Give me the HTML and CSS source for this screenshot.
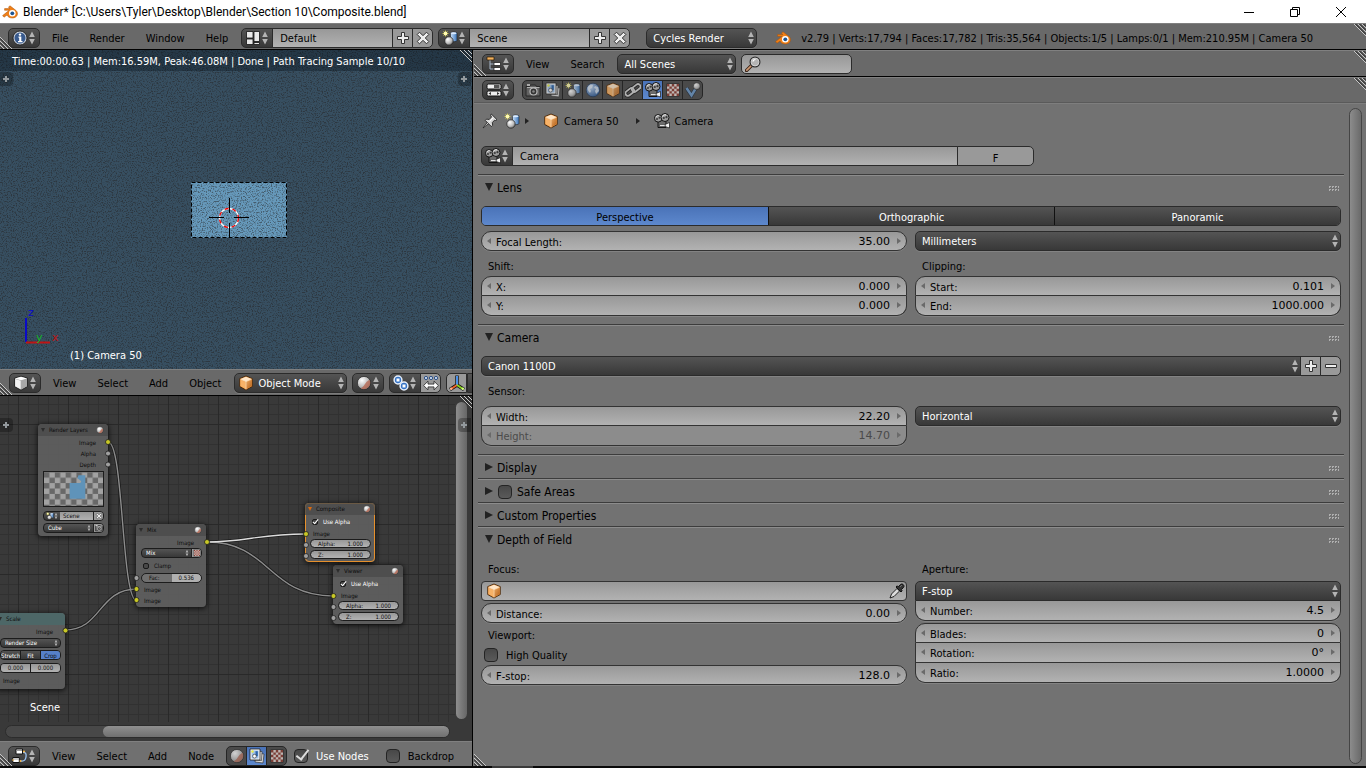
FILE: index.html
```html
<!DOCTYPE html>
<html lang="en">
<head>
<meta charset="utf-8">
<title>Blender* [C:\Users\Tyler\Desktop\Blender\Section 10\Composite.blend]</title>
<link rel="stylesheet" href="styles.css">
</head>
<body>
<svg class="sprite" width="0" height="0" aria-hidden="true">
  <defs>
    <linearGradient id="gOrange" x1="0" y1="0" x2="1" y2="1"><stop offset="0" stop-color="#e9a862"/><stop offset="1" stop-color="#b5601a"/></linearGradient>
    <radialGradient id="gBall" cx=".35" cy=".3" r=".8"><stop offset="0" stop-color="#fff"/><stop offset=".6" stop-color="#bbb"/><stop offset="1" stop-color="#555"/></radialGradient>
    <radialGradient id="gWorld" cx=".35" cy=".3" r=".8"><stop offset="0" stop-color="#b9d2f0"/><stop offset="1" stop-color="#24508c"/></radialGradient>
    <linearGradient id="gCyl" x1="0" x2="1"><stop offset="0" stop-color="#c8e0fa"/><stop offset="1" stop-color="#3b74b8"/></linearGradient>
    <filter id="grain" x="0" y="0" width="100%" height="100%" color-interpolation-filters="sRGB"><feTurbulence type="fractalNoise" baseFrequency=".8" numOctaves="2" seed="4"/><feColorMatrix values="0 0 0 0 .14  0 0 0 0 .13  0 0 0 0 .13  0 4 0 0 -1.9"/></filter>
  </defs>
  <symbol id="updown" viewBox="0 0 8 16"><path d="M4 1.500 6.800 7H1.200zM4 14.500 1.200 9H6.800z" fill="#b4b4b4"/></symbol>
  <symbol id="logo" viewBox="0 0 16 16"><path d="M.6 11.600 7.200 6.300H2.600V4.600H8L6.400 3.200 8 1.800 14 6.500C17 9.200 15.300 14 10.300 14 7.500 14 5.700 12.700 5.100 11L2 13.200z" fill="#f08018" stroke="#a85008" stroke-width=".5"/><circle cx="10.300" cy="9.300" r="3.300" fill="#fff"/><circle cx="10.300" cy="9.300" r="1.900" fill="#1d5594"/></symbol>
  <symbol id="info" viewBox="0 0 16 16"><circle cx="8" cy="8" r="7" fill="#c9cfd8" stroke="#111" stroke-width=".8"/><circle cx="8" cy="8" r="5.500" fill="#385a8e"/><path d="M6.500 6.500h2.800v4.500h1.200v1.300H6v-1.300h1.200V7.800h-.7z" fill="#fff"/><circle cx="8" cy="4.600" r="1.200" fill="#fff"/></symbol>
  <symbol id="layout" viewBox="0 0 16 16"><path d="M1.500 1.500h6.500v6.500H1.500zM1.500 9h6.500v5.500H1.500zM9 1.500h5.500v10H9zM9 12.500h5.500v2H9z" fill="#e8e8e8" stroke="#111" stroke-width=".8"/></symbol>
  <symbol id="plus" viewBox="0 0 16 16"><path d="M6.500 2.500h3v4h4v3h-4v4h-3v-4h-4v-3h4z" fill="#eee" stroke="#333" stroke-width="1"/></symbol>
  <symbol id="minus" viewBox="0 0 16 16"><path d="M2.500 6.500h11v3h-11z" fill="#eee" stroke="#333"/></symbol>
  <symbol id="cross" viewBox="0 0 16 16"><path d="M4.500 2.200 8 5.700 11.500 2.200 13.800 4.500 10.300 8 13.800 11.500 11.500 13.800 8 10.300 4.500 13.800 2.200 11.500 5.700 8 2.200 4.500z" fill="#eee" stroke="#333"/></symbol>
  <symbol id="scene" viewBox="0 0 16 16"><path d="M8.500 3.200c0-1.500 6.500-1.500 6.500 0v7.300c0 1.500-6.500 1.500-6.500 0z" fill="url(#gCyl)" stroke="#222" stroke-width=".6"/><ellipse cx="11.750" cy="3.300" rx="2.800" ry="1" fill="#dcecff"/><circle cx="7" cy="11" r="4.200" fill="url(#gBall)" stroke="#222" stroke-width=".7"/><path d="M3.500.5v6M.5 3.500h6M1.400 1.400l4.200 4.200M5.600 1.400 1.400 5.600" stroke="#d8d040" stroke-width=".8"/><circle cx="3.500" cy="3.500" r="1.900" fill="#fffbb0"/></symbol>
  <symbol id="outliner" viewBox="0 0 16 16"><path d="M4 4v9h4M4 8h4" fill="none" stroke="#a7b6c8"/><path d="M1 1h7v3H1z" fill="#f4b25e" stroke="#2a1800" stroke-width=".7"/><path d="M8 6.500h6.500v3H8zM8 11.500h6.500v3H8z" fill="#fff" stroke="#111" stroke-width=".7"/></symbol>
  <symbol id="props" viewBox="0 0 16 16"><rect x="1" y="2" width="14" height="5" rx="1.500" fill="#eee" stroke="#111"/><path d="M8 3h5.500v3H8z" fill="#555"/><rect x="1" y="9" width="14" height="5" rx="1.500" fill="#eee" stroke="#111"/><path d="M5 10v3l-2.500-1.500zM11 10v3l2.500-1.500z" fill="#333"/></symbol>
  <symbol id="photo" viewBox="0 0 16 16"><path d="M1 4.500h3.500l1-1.500h5l1 1.500h3.500v9.500H1z" fill="#6a6a6a" stroke="#1c1c1c"/><path d="M2 5.500h12.500" stroke="#d0d0d0"/><circle cx="8.500" cy="9.500" r="3.500" fill="#2a2a2a" stroke="#ddd" stroke-width="1.200"/><circle cx="8.500" cy="9.500" r="1.300" fill="#999"/><path d="M2 2h3v2H2z" fill="#ccc"/></symbol>
  <symbol id="rlayers" viewBox="0 0 16 16"><path d="m7 5 8 1-1 9-8-1z" fill="#ddd" stroke="#333" stroke-width=".7"/><path d="m5 3 8 .5-.5 9-8-.5z" fill="#eee" stroke="#333" stroke-width=".7"/><path d="M1 1h10v11H1z" fill="#f6f6f6" stroke="#222" stroke-width=".8"/><path d="M2.500 2.500h7v8h-7z" fill="#9cc0e8"/><path d="M6.500 3.200h2.300v5H6.500z" fill="#2a62a8"/><circle cx="5.500" cy="8.200" r="1.900" fill="#fff" stroke="#222" stroke-width=".6"/><circle cx="3.500" cy="3.500" r="1.200" fill="#ee4"/></symbol>
  <symbol id="world" viewBox="0 0 16 16"><circle cx="8" cy="8" r="6.800" fill="url(#gWorld)" stroke="#1b3150" stroke-width=".7"/><path d="M3 5c2-3 4-2 5-2l-1 3-2 1 1 2-1 2C3 9 2 7 3 5zM10 4l3 1 1 4-3 3-1-3 1-2-2-1z" fill="#e4ecf5" opacity=".8"/></symbol>
  <symbol id="cube" viewBox="0 0 16 16"><path d="M8 1 14.300 3.600V11.500L8 15 1.700 11.500V3.600z" fill="#e8913c" stroke="#3a1e05" stroke-width=".8"/><path d="M8 1.700 13.500 4 8 6.400 2.500 4z" fill="#ffe6c8"/><path d="M2.400 4.700 7.700 7v7L2.400 11z" fill="#f7b268"/><path d="M8.300 7 13.600 4.700V11L8.300 14z" fill="url(#gOrange)"/><path d="M8 6.500V14.500M2.500 4.300 8 6.600l5.500-2.300" fill="none" stroke="#fff1dc" stroke-width=".6"/></symbol>
  <symbol id="box3d" viewBox="0 0 16 16"><path d="M8 1.200 14.500 3.200V11.500L8 15.200 1.500 11.500V3.200z" fill="#aaa" stroke="#151515" stroke-width=".8"/><path d="M8 1.700 14 3.500 8 5.200 2 3.500z" fill="#fff"/><path d="m2.200 4 5.500 1.700v8.600l-5.500-3z" fill="#f2f2f2"/><path d="m8.300 5.700 5.500-1.700v7.300l-5.500 3z" fill="#a8a8a8"/></symbol>
  <symbol id="chain" viewBox="0 0 16 16"><g fill="none" stroke="#1c1c1c" stroke-width="3.600"><rect x="0" y="7.500" width="9.500" height="5" rx="2.500" transform="rotate(-38 4.700 10)"/><rect x="6.500" y="3.500" width="9.500" height="5" rx="2.500" transform="rotate(-38 11.200 6)"/></g><g fill="none" stroke="#d4d4d4" stroke-width="1.800"><rect x="0" y="7.500" width="9.500" height="5" rx="2.500" transform="rotate(-38 4.700 10)"/><rect x="6.500" y="3.500" width="9.500" height="5" rx="2.500" transform="rotate(-38 11.200 6)"/></g></symbol>
  <symbol id="movie" viewBox="0 0 16 16"><path d="M4 7h8v7.500H4z" fill="#6c6c6c" stroke="#151515"/><path d="m11 11.500 4.500-2v5.500L11 13.500z" fill="#f2f2f2" stroke="#151515" stroke-width=".7"/><path d="M5.500 11.500h5.500v2H5.500z" fill="#e4e4e4" stroke="#222" stroke-width=".5"/><circle cx="4.200" cy="5.300" r="3.800" fill="#9c9c9c" stroke="#151515"/><circle cx="11" cy="4.500" r="4" fill="#9c9c9c" stroke="#151515"/><path d="M1.900 4.300C2.400 3 3.500 2.500 4.600 2.600M8.400 3.600C9 2 10.500 1.500 12 1.900" stroke="#f0f0f0" fill="none"/><g fill="#3a3a3a"><circle cx="3" cy="6" r="1"/><circle cx="5.500" cy="4.800" r="1"/><circle cx="9.800" cy="5" r="1.100"/><circle cx="12.500" cy="4.200" r="1.100"/></g></symbol>
  <symbol id="checker" viewBox="0 0 16 16"><path d="M1.500 1.500h13v13h-13z" fill="#e4dad5" stroke="#333"/><path d="M2 2h2.400v2.400H2zM6.800 2h2.400v2.400H6.800zM11.600 2H14v2.400h-2.400zM4.400 4.400h2.400v2.400H4.400zM9.200 4.400h2.400v2.400H9.200zM2 6.800h2.400v2.400H2zM6.800 6.800h2.400v2.400H6.800zM11.600 6.800H14v2.400h-2.400zM4.400 9.200h2.400v2.400H4.400zM9.200 9.200h2.400v2.400H9.200zM2 11.600h2.400V14H2zM6.800 11.600h2.400V14H6.800zM11.600 11.600H14V14h-2.400z" fill="#8c3a30"/></symbol>
  <symbol id="physics" viewBox="0 0 16 16"><path d="m1.500 6 5 7.500L11 6" fill="none" stroke="#202c3a" stroke-width="3.800"/><path d="m1.500 6 5 7.500L11 6" fill="none" stroke="#6c98c6" stroke-width="2.500"/><circle cx="11.800" cy="4.200" r="3.500" fill="url(#gBall)" stroke="#222" stroke-width=".6"/></symbol>
  <symbol id="pin" viewBox="0 0 16 16"><path d="m1 15 5-6.500L7.500 10z" fill="#eee" stroke="#222" stroke-width=".8"/><path d="m9.300 1 5.700 5.700-1.500.8-1-.3-2.200 2.400.4 2.600-1.400 1.300L3.300 7.500l1.300-1.400 2.600.4L9.500 4l-.8-1.500z" fill="#d8d8d8" stroke="#222" stroke-width=".9"/><path d="m7.500 8.500 3.500-3.700" stroke="#fff"/></symbol>
  <symbol id="material" viewBox="0 0 16 16"><circle cx="8" cy="8" r="6.600" fill="url(#gBall)" stroke="#222" stroke-width=".7"/><path d="M13.500 4.800A6.500 6.500 0 0 1 4.800 13.500Q8 11.500 9 9t4.500-4.200z" fill="#b76f5a" opacity=".85"/></symbol>
  <symbol id="pivot" viewBox="0 0 16 16"><g fill="#3572c4" stroke="#e8f0fb" stroke-width="1.500"><circle cx="5" cy="5" r="3.900"/><circle cx="11" cy="11" r="3.900"/></g><path d="M3.500 3.500h3v3h-3zM9.500 9.500h3v3h-3z" fill="#fff"/></symbol>
  <symbol id="manip" viewBox="0 0 16 16"><g fill="#cfe0f7" stroke="#2c4f86"><circle cx="3" cy="3" r="1.600"/><circle cx="8" cy="3" r="1.600"/><circle cx="13" cy="3" r="1.600"/></g><path d="M.6 10.500 5 6.200v2.900h6V6.200l4.400 4.300-4.400 4.300v-2.900H5v2.900z" fill="#fff" stroke="#222" stroke-width=".8"/></symbol>
  <symbol id="axes" viewBox="0 0 16 16"><g stroke="#111" stroke-width="3.400"><path d="M8 .5V10M8 10l-7 4.500M8 10l7 4.500"/></g><path d="M8 1V10" stroke="#4a90e8" stroke-width="2"/><path d="m8 10-6 4" stroke="#f0622a" stroke-width="2"/><path d="m8 10 6 4" stroke="#8bd322" stroke-width="2"/><circle cx="2.200" cy="13.800" r="1.300" fill="#ffb08c"/><circle cx="13.800" cy="13.800" r="1.300" fill="#d4ff80"/></symbol>
  <symbol id="nodetree" viewBox="0 0 16 16"><path d="M10 4c4 0 4.500 2 4 5S12 13.500 9 13" fill="none" stroke="#9cc4f4" stroke-width="1.300"/><path d="M4 1h6.500v5H4zM.8 9.500h6.500v5H.8z" fill="#fff" stroke="#111"/><path d="M4.500 2.500h5.500M1.300 11h5.500" stroke="#999"/><circle cx="12" cy="3.500" r="1" fill="#fb4"/><circle cx="8.500" cy="13" r="1" fill="#fb4"/><circle cx="1" cy="12" r=".8" fill="#fb4"/></symbol>
  <symbol id="dropper" viewBox="0 0 16 16"><path d="M1 15 2.500 11 8 5.500 10.500 8 5 13.500z" fill="#ddd" stroke="#111" stroke-width=".9"/><path d="m7 4 5 5 1.200-1.200-1-1L14.500 4.500C16 2.500 13.500 0 11.500 1.500L9.200 3.800l-1-1z" fill="#333" stroke="#111"/><path d="m11.500 3.500 1-1" stroke="#aaa"/></symbol>
  <symbol id="magnifier" viewBox="0 0 16 16"><path d="M6.500 9.500 1.500 14.500" stroke="#3a2417" stroke-width="3.400" stroke-linecap="round"/><path d="M6 10 1.800 14.200" stroke="#d09a74" stroke-width="1.700" stroke-linecap="round"/><circle cx="10" cy="6" r="4.700" fill="#b4b4b4" stroke="#333" stroke-width="1.600"/><circle cx="10" cy="6" r="4" fill="none" stroke="#eee" stroke-width=".7"/><path d="M7.800 5.500C8.200 4 9.500 3.500 10.500 3.500" stroke="#fff" stroke-width="1.200" fill="none"/></symbol>
  <symbol id="addregion" viewBox="0 0 14 14"><path d="M5 4h2v2h2v2H7v2H5V8H3V6h2z" fill="#93999d"/></symbol>
  <symbol id="gripTR" viewBox="0 0 12 12"><path d="M0 0 12 12M4 0l8 8M8 0l4 4" stroke="#c8c8c8"/><path d="M1.500 0 12 10.500M5.500 0 12 6.500M9.500 0 12 2.500" stroke="#222"/></symbol>
  <symbol id="gripBL" viewBox="0 0 12 12"><path d="m0 0 12 12M0 4l8 8M0 8l4 4" stroke="#c8c8c8"/><path d="m0 1.500L10.500 12M0 5.500 6.500 12M0 9.500 2.500 12" stroke="#222"/></symbol>
</svg>

<header class="titlebar">
  <svg class="ico"><use href="#logo"/></svg>
  <h1 class="title">Blender* [C:\Users\Tyler\Desktop\Blender\Section 10\Composite.blend]</h1>
  <button class="win" aria-label="Minimize"><svg width="10" height="10"><path d="M0 5.500h10" stroke="#000"/></svg></button>
  <button class="win" aria-label="Restore"><svg width="10" height="10"><path d="M.5 2.500h7v7h-7zM2.500 2.500v-2h7v7h-2" fill="none" stroke="#000"/></svg></button>
  <button class="win" aria-label="Close"><svg width="10" height="10"><path d="m0 0 10 10M10 0 0 10" stroke="#000"/></svg></button>
</header>

<div class="bar info-bar">
  <button class="sel" aria-label="Editor type: Info"><svg class="ico"><use href="#info"/></svg><svg class="ud"><use href="#updown"/></svg></button>
  <nav class="menus"><button>File</button><button>Render</button><button>Window</button><button>Help</button></nav>
  <div class="group">
    <button class="sel" aria-label="Screen layouts"><svg class="ico"><use href="#layout"/></svg><svg class="ud"><use href="#updown"/></svg></button>
    <input class="name" aria-label="Screen layout" value="Default">
    <button class="act" aria-label="Add layout"><svg class="ico"><use href="#plus"/></svg></button>
    <button class="act" aria-label="Delete layout"><svg class="ico"><use href="#cross"/></svg></button>
  </div>
  <div class="group scene-group">
    <button class="sel" aria-label="Scenes"><svg class="ico"><use href="#scene"/></svg><svg class="ud"><use href="#updown"/></svg></button>
    <input class="name" aria-label="Scene" value="Scene">
    <button class="act" aria-label="Add scene"><svg class="ico"><use href="#plus"/></svg></button>
    <button class="act" aria-label="Delete scene"><svg class="ico"><use href="#cross"/></svg></button>
  </div>
  <span class="drop engine"><select aria-label="Render engine"><option>Cycles Render</option></select><svg class="ud"><use href="#updown"/></svg></span>
  <svg class="ico"><use href="#logo"/></svg>
  <p class="stats">v2.79 | Verts:17,794 | Faces:17,782 | Tris:35,564 | Objects:1/5 | Lamps:0/1 | Mem:210.95M | Camera 50</p>
  <svg class="grip tr"><use href="#gripTR"/></svg><svg class="grip bl"><use href="#gripBL"/></svg>
</div>

<main class="workspace">
  <div class="left">
    <section class="view3d" aria-label="3D View">
      <svg class="fill" aria-hidden="true">
        <rect x="191" y="132" width="96" height="56" fill="#6699bb"/>
        <rect width="100%" height="100%" filter="url(#grain)" opacity=".5"/>
        <rect x="191.500" y="132.500" width="95" height="55" fill="none" stroke="#000" stroke-dasharray="4 2"/>
        <circle cx="229" cy="168" r="9.500" fill="none" stroke="#fff" stroke-width="1.300"/>
        <circle cx="229" cy="168" r="9.500" fill="none" stroke="#f00000" stroke-width="1.300" stroke-dasharray="4 4"/>
        <path d="M209 167.500h15M234 167.500h15M229.500 148v15M229.500 173v15" stroke="#000"/>
        <path d="M26 268v24" stroke="#0a0ac8" stroke-width="2"/>
        <path d="M26 292.500h24" stroke="#c01414" stroke-width="2"/>
        <text x="28" y="266" fill="#0a0ac8">z</text><text x="36" y="291" fill="#14b428">y</text><text x="52" y="291" fill="#c01414">x</text>
      </svg>
      <p class="render-status">Time:00:00.63 | Mem:16.59M, Peak:46.08M | Done | Path Tracing Sample 10/10</p>
      <p class="object-name">(1) Camera 50</p>
      <button class="region l" aria-label="Show tool shelf"><svg><use href="#addregion"/></svg></button>
      <button class="region r" aria-label="Show properties"><svg><use href="#addregion"/></svg></button>
      <svg class="grip tr"><use href="#gripTR"/></svg>
    </section>
    <div class="bar view-bar">
      <button class="sel" aria-label="Editor type: 3D View"><svg class="ico"><use href="#box3d"/></svg><svg class="ud"><use href="#updown"/></svg></button>
      <nav class="menus"><button>View</button><button>Select</button><button>Add</button><button>Object</button></nav>
      <span class="drop mode"><svg class="ico lead"><use href="#cube"/></svg><select aria-label="Mode"><option>Object Mode</option></select><svg class="ud"><use href="#updown"/></svg></span>
      <button class="sel" aria-label="Viewport shading"><svg class="ico"><use href="#material"/></svg><svg class="ud"><use href="#updown"/></svg></button>
      <div class="group">
        <button class="sel" aria-label="Pivot point"><svg class="ico"><use href="#pivot"/></svg><svg class="ud"><use href="#updown"/></svg></button>
        <button class="act" aria-label="Manipulate centers"><svg class="ico"><use href="#manip"/></svg></button>
      </div>
      <div class="group">
        <button class="act" aria-label="Manipulator"><svg class="ico"><use href="#axes"/></svg></button>
        <button class="sel" aria-label="Translate"></button>
      </div>
      <svg class="grip bl"><use href="#gripBL"/></svg>
    </div>

    <section class="nodes" aria-label="Node Editor">
      <div class="gridlines"></div>
      <svg class="fill wires" aria-hidden="true">
        <g fill="none" stroke="#1c1c1c" stroke-width="3"><path d="M108 46C124 46 121 205 137 205M65 234C102 234 98 193 137 193M207 146C245 146 260 138 305 138M207 146C270 146 268 200 333 200"/></g>
        <g fill="none" stroke="#8c8c8c" stroke-width="1.400"><path d="M108 46C124 46 121 205 137 205M65 234C102 234 98 193 137 193M207 146C270 146 268 200 333 200"/><path d="M207 146C245 146 260 138 305 138" stroke="#ddd"/></g>
      </svg>

      <article class="node render-layers">
        <header>Render Layers<svg><use href="#material"/></svg></header>
        <p class="out">Image</p><p class="out">Alpha</p><p class="out">Depth</p>
        <svg class="preview" viewBox="0 0 60 34"><defs><pattern id="chk" width="11" height="11" patternUnits="userSpaceOnUse"><path d="M0 0h11v11H0z" fill="#a2a2a2"/><path d="M0 0h5.500v5.500H0zM5.500 5.500H11V11H5.500z" fill="#686868"/></pattern></defs><path d="M0 0h60v34H0z" fill="url(#chk)"/><path d="M26 11h11l1-2-4-3 1-3h7v24H26z" fill="#5f93b9"/></svg>
        <div class="row"><button class="nsel" aria-label="Browse scene"><svg class="m"><use href="#scene"/></svg><svg class="u"><use href="#updown"/></svg></button><input class="nfield" aria-label="Node scene" value="Scene"><button class="nact" aria-label="Unlink"><svg class="m"><use href="#cross"/></svg></button></div>
        <div class="row"><span class="ndrop"><select aria-label="Render layer"><option>Cube</option></select><svg class="u"><use href="#updown"/></svg></span><button class="nact" aria-label="Render layer"><svg class="m"><use href="#photo"/></svg></button></div>
      </article>

      <article class="node mix">
        <header>Mix<svg><use href="#material"/></svg></header>
        <p class="out">Image</p>
        <div class="row"><span class="ndrop"><select aria-label="Blend mode"><option>Mix</option></select><svg class="u"><use href="#updown"/></svg></span><button class="nact" aria-label="Use alpha"><svg class="m"><use href="#checker"/></svg></button></div>
        <label class="ncheck"><input type="checkbox">Clamp</label>
        <label class="nnum fac"><span>Fac:</span><input value="0.536"></label>
        <p>Image</p><p>Image</p>
      </article>

      <article class="node viewer">
        <header>Viewer<svg><use href="#material"/></svg></header>
        <label class="ncheck lit"><input type="checkbox" checked>Use Alpha</label>
        <p>Image</p>
        <label class="nnum"><span>Alpha:</span><input value="1.000"></label>
        <label class="nnum"><span>Z:</span><input value="1.000"></label>
      </article>

      <article class="node composite">
        <header>Composite<svg><use href="#material"/></svg></header>
        <label class="ncheck lit"><input type="checkbox" checked>Use Alpha</label>
        <p>Image</p>
        <label class="nnum"><span>Alpha:</span><input value="1.000"></label>
        <label class="nnum"><span>Z:</span><input value="1.000"></label>
      </article>

      <article class="node scale">
        <header>Scale</header>
        <p class="out">Image</p>
        <div class="row"><span class="ndrop"><select aria-label="Space"><option>Render Size</option></select><svg class="u"><use href="#updown"/></svg></span></div>
        <div class="row seg"><button>Stretch</button><button>Fit</button><button class="on">Crop</button></div>
        <div class="row pair"><input aria-label="Offset X" value="0.000"><input aria-label="Offset Y" value="0.000"></div>
        <p>Image</p>
      </article>

      <svg class="fill sockets" aria-hidden="true">
        <g stroke="#1e1e1e" stroke-width=".8"><g fill="#c8c826"><circle cx="108" cy="46" r="2.500"/><circle cx="207" cy="146" r="2.500"/><circle cx="136.500" cy="193" r="2.500"/><circle cx="136.500" cy="204" r="2.500"/><circle cx="306" cy="138" r="2.500"/><circle cx="333.500" cy="200" r="2.500"/><circle cx="65.500" cy="234.500" r="2.500"/></g>
        <g fill="#a0a0a0"><circle cx="108" cy="57.500" r="2.500"/><circle cx="108" cy="68.500" r="2.500"/><circle cx="136.500" cy="182" r="2.500"/><circle cx="306" cy="149" r="2.500"/><circle cx="306" cy="160" r="2.500"/><circle cx="333.500" cy="211" r="2.500"/><circle cx="333.500" cy="222" r="2.500"/></g></g>
      </svg>
      <p class="tree-name">Scene</p>
      <div class="vscroll"></div>
      <div class="hscroll"><div class="thumb"></div></div>
      <button class="region l" aria-label="Show tool shelf"><svg><use href="#addregion"/></svg></button>
      <button class="region r" aria-label="Show properties"><svg><use href="#addregion"/></svg></button>
      <svg class="grip tr"><use href="#gripTR"/></svg>
    </section>
    <div class="bar node-bar">
      <button class="sel" aria-label="Editor type: Node Editor"><svg class="ico"><use href="#nodetree"/></svg><svg class="ud"><use href="#updown"/></svg></button>
      <nav class="menus"><button>View</button><button>Select</button><button>Add</button><button>Node</button></nav>
      <div class="tabs"><button aria-label="Shader"><svg class="ico"><use href="#material"/></svg></button><button class="on" aria-label="Compositing"><svg class="ico"><use href="#rlayers"/></svg></button><button aria-label="Texture"><svg class="ico"><use href="#checker"/></svg></button></div>
      <label class="check lit"><input type="checkbox" checked><span>Use Nodes</span></label>
      <label class="check"><input type="checkbox"><span>Backdrop</span></label>
      <svg class="grip bl"><use href="#gripBL"/></svg>
    </div>
  </div>

  <div class="right">
    <div class="bar side-bar">
      <button class="sel" aria-label="Editor type: Outliner"><svg class="ico"><use href="#outliner"/></svg><svg class="ud"><use href="#updown"/></svg></button>
      <nav class="menus"><button>View</button><button>Search</button></nav>
      <span class="drop scenes"><select aria-label="Display mode"><option>All Scenes</option></select><svg class="ud"><use href="#updown"/></svg></span>
      <span class="search"><svg class="ico"><use href="#magnifier"/></svg><input type="search" aria-label="Filter"></span>
      <svg class="grip tr"><use href="#gripTR"/></svg><svg class="grip bl"><use href="#gripBL"/></svg>
    </div>
    <div class="bar side-bar props-bar">
      <button class="sel" aria-label="Editor type: Properties"><svg class="ico"><use href="#props"/></svg><svg class="ud"><use href="#updown"/></svg></button>
      <nav class="tabs"><button aria-label="Render"><svg class="ico"><use href="#photo"/></svg></button><button aria-label="Render Layers"><svg class="ico"><use href="#rlayers"/></svg></button><button aria-label="Scene"><svg class="ico"><use href="#scene"/></svg></button><button aria-label="World"><svg class="ico"><use href="#world"/></svg></button><button aria-label="Object"><svg class="ico"><use href="#cube"/></svg></button><button aria-label="Constraints"><svg class="ico"><use href="#chain"/></svg></button><button class="on" aria-label="Camera data"><svg class="ico"><use href="#movie"/></svg></button><button aria-label="Texture"><svg class="ico"><use href="#checker"/></svg></button><button aria-label="Physics"><svg class="ico"><use href="#physics"/></svg></button></nav>
      <svg class="grip tr"><use href="#gripTR"/></svg>
    </div>
    <div class="props">
      <div class="panels">
        <div class="crumbs"><svg class="ico"><use href="#pin"/></svg><svg class="ico"><use href="#scene"/></svg><i class="tri"></i><svg class="ico"><use href="#cube"/></svg><span>Camera 50</span><i class="tri t2"></i><svg class="ico"><use href="#movie"/></svg><span>Camera</span></div>
        <div class="datablock"><button class="sel" aria-label="Browse camera"><svg class="ico"><use href="#movie"/></svg><svg class="ud"><use href="#updown"/></svg></button><input class="name" aria-label="Camera name" value="Camera"><button class="fake">F</button></div>

        <section class="panel">
          <h2 class="open">Lens</h2>
          <div class="content">
            <div class="segments"><button class="on">Perspective</button><button>Orthographic</button><button>Panoramic</button></div>
            <div class="cols">
              <label class="num"><span>Focal Length:</span><input value="35.00"></label>
              <span class="drop"><select aria-label="Lens unit"><option>Millimeters</option></select><svg class="ud"><use href="#updown"/></svg></span>
            </div>
            <div class="cols">
              <div class="col"><p class="cap gap">Shift:</p><div class="stack"><label class="num"><span>X:</span><input value="0.000"></label><label class="num"><span>Y:</span><input value="0.000"></label></div></div>
              <div class="col"><p class="cap gap">Clipping:</p><div class="stack"><label class="num"><span>Start:</span><input value="0.101"></label><label class="num"><span>End:</span><input value="1000.000"></label></div></div>
            </div>
          </div>
        </section>

        <section class="panel">
          <h2 class="open">Camera</h2>
          <div class="content">
            <div class="group preset"><span class="drop"><select aria-label="Camera preset"><option>Canon 1100D</option></select><svg class="ud"><use href="#updown"/></svg></span><button class="act" aria-label="Add preset"><svg class="ico"><use href="#plus"/></svg></button><button class="act" aria-label="Remove preset"><svg class="ico"><use href="#minus"/></svg></button></div>
            <p class="cap gap sensor">Sensor:</p>
            <div class="cols">
              <div class="stack"><label class="num"><span>Width:</span><input value="22.20"></label><label class="num off"><span>Height:</span><input value="14.70" disabled></label></div>
              <span class="drop"><select aria-label="Sensor fit"><option>Horizontal</option></select><svg class="ud"><use href="#updown"/></svg></span>
            </div>
          </div>
        </section>

        <section class="panel"><h2>Display</h2></section>
        <section class="panel"><h2><label class="check"><input type="checkbox">Safe Areas</label></h2></section>
        <section class="panel"><h2>Custom Properties</h2></section>

        <section class="panel">
          <h2 class="open">Depth of Field</h2>
          <div class="content">
            <div class="cols">
              <div class="col spaced">
                <p class="cap">Focus:</p>
                <span class="object-field"><svg class="ico"><use href="#cube"/></svg><input aria-label="Focus object"><button aria-label="Pick object"><svg class="ico"><use href="#dropper"/></svg></button></span>
                <label class="num"><span>Distance:</span><input value="0.00"></label>
                <div class="col"><p class="cap">Viewport:</p><label class="check hq"><input type="checkbox"><span>High Quality</span></label><label class="num"><span>F-stop:</span><input value="128.0"></label></div>
              </div>
              <div class="col spaced">
                <p class="cap">Aperture:</p>
                <div class="stack mixed"><span class="drop"><select aria-label="Aperture type"><option>F-stop</option></select><svg class="ud"><use href="#updown"/></svg></span><label class="num"><span>Number:</span><input value="4.5"></label></div>
                <div class="stack"><label class="num"><span>Blades:</span><input value="0"></label><label class="num"><span>Rotation:</span><input value="0°"></label><label class="num"><span>Ratio:</span><input value="1.0000"></label></div>
              </div>
            </div>
          </div>
        </section>
      </div>
      <div class="pscroll"></div>
      <svg class="grip bl"><use href="#gripBL"/></svg>
    </div>
  </div>
</main>
<footer class="edge"></footer>
</body>
</html>
```

FILE: styles.css
```css
:root {
  --ui: "DejaVu Sans Condensed", "DejaVu Sans", sans-serif;
  --num: "DejaVu Sans", sans-serif;
  --dark: linear-gradient(#545454, #383838);
  --light: linear-gradient(#989898, #b2b2b2);
  --blue: linear-gradient(#4a73b8, #5d88cd);
  --edge: #2b2b2b;
}
* { box-sizing: border-box; }
body {
  margin: 0;
  min-height: 100vh;
  display: flex;
  flex-direction: column;
  background: #727272;
  color: #000;
  font: 11px/20px var(--ui);
  overflow: hidden;
}
p, h1, h2 { margin: 0; font: inherit; }
button, input, select { font: inherit; color: inherit; margin: 0; padding: 0; border: 0; background: none; border-radius: 0; appearance: none; outline: 0; min-width: 0; }
svg { display: block; }
.sprite { position: absolute; }
.ico { width: 16px; height: 16px; flex: none; }
.ud { width: 8px; height: 16px; flex: none; }

.titlebar { display: flex; align-items: center; height: 23px; padding: 0 2px; background: #fff; }
.title { flex: 1; padding-left: 5px; font: 12px/20px Roboto, sans-serif; white-space: nowrap; }
.win { width: 46px; height: 20px; display: grid; place-items: center; }

.bar {
  position: relative;
  display: flex;
  align-items: center;
  height: 27px;
  flex: none;
  padding: 2px 0 0 8px;
  background: #696969;
  border-top: 1px solid #808080;
  border-bottom: 1px solid #000;
  overflow: hidden;
  white-space: nowrap;
}
.side-bar { padding-top: 0; }
.sel, .act, .tabs button {
  display: flex;
  align-items: center;
  height: 20px;
  border: 1px solid var(--edge);
  flex: none;
}
.sel { width: 32px; justify-content: space-between; padding: 0 3px; background: var(--dark); border-radius: 5px; }
.act { width: 21px; justify-content: center; background: #999; margin-left: -1px; }
.act:last-child { border-radius: 0 5px 5px 0; }
.act:first-child { border-radius: 5px 0 0 5px; margin: 0; }
.menus { display: flex; gap: 1px; margin: 0 3px 0 2px; }
.menus button { padding: 2px 10px 0; }
.group { display: flex; flex: none; }
.group .sel:first-child, .datablock .sel { border-radius: 5px 0 0 5px; }
.group .sel:last-child { border-radius: 0 5px 5px 0; }
.name { height: 20px; width: 121px; padding: 2px 7px 0; background: var(--light); border: 1px solid var(--edge); margin-left: -1px; }
.scene-group { margin: 0 16px 0 5px; }
.drop { position: relative; display: flex; color: #fff; height: 20px; }
.drop select { flex: 1; height: 20px; padding: 2px 16px 0 6px; line-height: 16px; background: var(--dark); border: 1px solid var(--edge); border-radius: 5px; box-shadow: 0 1px rgba(255,255,255,.12); }
.drop .ud { position: absolute; right: 2px; top: 2px; pointer-events: none; }
.lead { position: absolute; left: 4px; top: 2px; pointer-events: none; }
.engine { width: 111px; margin-right: 18px; }
.stats { padding: 2px 0 0 10px; }
.grip { position: absolute; width: 12px; height: 12px; pointer-events: none; }
.grip.tr { right: 0; top: 0; }
.grip.bl { left: 0; bottom: 0; }

.workspace { flex: 1; display: grid; grid-template-columns: 473fr 893fr; min-height: 0; }
.left { display: flex; flex-direction: column; border-right: 1px solid #000; min-width: 0; }
.view3d { position: relative; flex: 319 1 0; background: #374f61; color: #fff; overflow: hidden; }
.fill { position: absolute; left: 0; top: 0; width: 100%; height: 100%; pointer-events: none; }
.fill text { font: 11px var(--num); }
.render-status { position: relative; height: 21px; padding-left: 12px; line-height: 24px; background: rgba(0,10,20,.32); white-space: nowrap; }
.object-name { position: absolute; left: 70px; bottom: 3px; }
.region { position: absolute; width: 13px; height: 14px; background: rgba(0,0,0,.28); }
.region svg { width: 14px; height: 14px; }
.region.l { left: 0; top: 22px; border-radius: 0 4px 4px 0; }
.region.r { right: 1px; top: 22px; border-radius: 4px 0 0 4px; }
.view-bar { padding-left: 9px; }
.mode { width: 113px; margin-right: 5px; flex: none; }
.mode select { padding-left: 23px; }
.view-bar > .group { margin-left: 5px; }

.nodes { position: relative; flex: 346 1 0; background: #393939; overflow: hidden; font: 6px/11px var(--ui); color: #0c0c0c; }
.gridlines {
  position: absolute; left: 0; top: 0; right: 17px; bottom: 19px;
  background:
    linear-gradient(90deg, #292929 1px, transparent 1px) 18px 28px / 50px 50px,
    linear-gradient(#292929 1px, transparent 1px) 18px 28px / 50px 50px,
    linear-gradient(90deg, #313131 1px, transparent 1px) 8px 8px / 10px 10px,
    linear-gradient(#313131 1px, transparent 1px) 8px 8px / 10px 10px;
}
.node { position: absolute; width: 70px; padding: 0 4px 1px 5px; border-radius: 4px; background: rgba(95,95,95,.93); box-shadow: 0 1px 5px 1px rgba(0,0,0,.65); }
.node header { position: relative; height: 12px; line-height: 12px; margin: 0 -4px 1px -5px; padding-left: 11px; background: rgba(75,75,75,.8); border-radius: 4px 4px 0 0; }
.node header::before { content: ""; position: absolute; left: 3px; top: 4px; border: 2px solid transparent; border-top: 4px solid #2c2c2c; border-bottom: 0; }
.node header svg { position: absolute; right: 4px; top: 2px; width: 8px; height: 8px; }
.node p { padding-left: 3px; }
.node p.out { text-align: right; padding: 0 8px 0 0; }
.render-layers { left: 38px; top: 28px; }
.mix { left: 136px; top: 128px; }
.composite { left: 305px; top: 107px; outline: 1px solid #e6902c; outline-offset: -1px; }
.composite header::before { border-top-color: #d86a10; }
.viewer { left: 333px; top: 169px; }
.scale { left: -5px; top: 217px; }
.scale header { background: #4d6767; }
.preview { width: 61px; height: 36px; margin: 1px 0 4px; border: 1px solid #1c1c1c; }
.row { display: flex; height: 10px; margin-bottom: 2px; border: 1px solid #1c1c1c; border-radius: 4px; overflow: hidden; background: var(--dark); color: #fff; line-height: 9px; }
.nsel { display: flex; width: 16px; align-items: center; padding: 0 2px; }
.m { width: 8px; height: 8px; flex: none; }
.u { width: 4px; height: 8px; flex: none; }
.nfield { flex: 1; background: var(--light); color: #111; padding-left: 3px; }
.nact { width: 10px; background: #9a9a9a; display: grid; place-items: center; border-left: 1px solid #222; }
.ndrop { flex: 1; display: flex; align-items: center; padding-right: 2px; }
.ndrop select { flex: 1; padding-left: 4px; }
.ncheck { display: flex; align-items: center; height: 12px; }
.ncheck.lit { color: #fff; }
.ncheck input { position: relative; width: 6px; height: 6px; margin: 0 5px 0 2px; background: #484848; border: 1px solid #181818; border-radius: 2px; }
.ncheck input:checked::after { content: ""; position: absolute; left: 1px; top: -2px; width: 2px; height: 5px; border: solid #fff; border-width: 0 1px 1px 0; rotate: 40deg; }
.nnum { display: flex; align-items: center; height: 9px; margin: 0 0 2px; padding: 0 7px; line-height: 9px; border: 1px solid #1c1c1c; border-radius: 5px; background: var(--light); }
.nnum span { flex: 1; }
.nnum input { width: 22px; text-align: right; height: 9px; }
.fac { height: 10px; margin: 1px 0; background: linear-gradient(90deg, #707070 50%, #b0b0b0 50%); }
.seg button { flex: 1; background: var(--dark); border-right: 1px solid #1c1c1c; overflow: hidden; }
.seg button.on { background: #5680c8; color: #0c0c0c; border: 0; }
.seg { margin-bottom: 3px; }
.pair input { flex: 1; width: 30px; text-align: center; background: var(--light); color: #111; }
.pair input + input { border-left: 1px solid #1c1c1c; }
.scale { padding-bottom: 3px; }
.scale .out { margin-bottom: 1px; }
.tree-name { position: absolute; left: 30px; bottom: 23px; font: 11px/20px var(--ui); color: #fff; }
.vscroll { position: absolute; right: 5px; top: 6px; bottom: 22px; width: 11px; border-radius: 6px; background: linear-gradient(90deg, #8d8d8d, #666); }
.hscroll { position: absolute; left: 5px; right: 22px; bottom: 3px; height: 13px; border-radius: 7px; background: #484848; border: 1px solid #2c2c2c; }
.thumb { height: 11px; margin-left: 22%; border-radius: 6px; background: linear-gradient(#8f8f8f, #707070); }
.node-bar { height: 25px; border-bottom: 0; background: #707070; padding-top: 4px; }
.node-bar .menus { margin-right: 2px; }

.tabs { display: flex; }
.tabs button { width: 21px; margin-left: -1px; justify-content: center; background: #4a4a4a; border-color: #262626; }
.tabs button .ico { opacity: .75; }
.tabs button:first-child { border-radius: 5px 0 0 5px; margin: 0; }
.tabs button:last-child { border-radius: 0 5px 5px 0; }
.tabs .on { background: var(--blue); }
.tabs .on .ico { opacity: 1; }
.node-bar .tabs { margin-right: 7px; }
.check { display: flex; align-items: center; height: 20px; }
.check span { padding-top: 2px; }
.check input { position: relative; width: 14px; height: 14px; margin-right: 8px; background: linear-gradient(#484848, #5a5a5a); border: 1px solid #242424; border-radius: 4px; }
.check input:checked::after { content: ""; position: absolute; left: 4px; top: -3px; width: 5px; height: 11px; border: solid #ddd; border-width: 0 2px 2px 0; rotate: 38deg; }
.lit { color: #fff; }
.node-bar .lit { margin-right: 17px; }

.right { display: flex; flex-direction: column; min-width: 0; border-left: 1px solid #727272; }
.scenes { width: 119px; margin-right: 5px; }
.search { position: relative; width: 111px; }
.search input { width: 100%; height: 20px; display: block; padding-left: 22px; background: var(--light); border: 1px solid var(--edge); border-radius: 5px; }
.search .ico { position: absolute; left: 4px; top: 2px; }
.props-bar { height: 26px; border-bottom-color: #5a5a5a; gap: 8px; }
.props { position: relative; flex: 1; display: flex; border-top: 1px solid #7e7e7e; padding: 4px 4px 2px 4px; }
.panels { flex: 1; min-width: 0; margin-right: 5px; }
.pscroll { width: 13px; border: 1px solid #454545; border-radius: 7px; background: linear-gradient(90deg, #8c8c8c, #6a6a6a); }
.crumbs { display: flex; align-items: center; height: 24px; padding: 0 4px; margin-top: 1px; }
.crumbs .ico + .ico { margin-left: 6px; }
.tri { border: 3px solid transparent; border-left: 4px solid #222; border-right: 0; margin: 0 14px 0 5px; }
.crumbs span { padding: 2px 0 0 5px; }
.crumbs .t2 { margin-left: 17px; margin-right: 14px; }
.datablock { display: grid; grid-template-columns: 32px 29fr 5fr 20fr; margin: 13px 3px 8px; }
.datablock .name { width: auto; }
.fake { height: 20px; padding-top: 2px; background: #999; border: 1px solid var(--edge); border-radius: 0 5px 5px 0; margin-left: -1px; }

.panel { border-top: 1px solid #3c3c3c; box-shadow: inset 0 1px #8c8c8c; }
.panel h2 { position: relative; display: flex; align-items: center; height: 23px; padding: 2px 0 0 19px; font: 12px/20px var(--ui); }
.panel h2::before { content: ""; position: absolute; left: 7px; top: 8px; border: 4px solid transparent; border-left: 8px solid #222; border-right: 0; }
.panel h2.open::before { border: 4px solid transparent; border-top: 8px solid #222; border-bottom: 0; }
.panel h2::after { content: ""; position: absolute; right: 5px; top: 11px; width: 11px; height: 5px; background: conic-gradient(#c0c0c0 25%, transparent 0) 0 0 / 3px 3px; opacity: .8; }
.panel h2 .check input { margin: 0 5px 0 1px; }
.content { padding: 8px 3px; }
.segments { display: grid; grid-template-columns: 1fr 1fr 1fr; margin-bottom: 5px; border: 1px solid var(--edge); border-radius: 5px; overflow: hidden; }
.segments button { height: 18px; padding-top: 1px; background: var(--dark); color: #fff; }
.segments button + button { border-left: 1px solid #111; }
.segments .on { background: var(--blue); color: #000; }
.cols { display: grid; grid-template-columns: 1fr 1fr; gap: 8px; }
.col { display: flex; flex-direction: column; min-width: 0; }
.spaced { gap: 2px; padding-top: 1px; }
.cap { height: 20px; padding-left: 7px; line-height: 22px; }
.gap { margin-top: 5px; }
.sensor { margin-bottom: 5px; }
.num { position: relative; display: flex; height: 20px; padding: 0 16px 0 14px; line-height: 20px; background: var(--light); border: 1px solid #333; border-radius: 10px; box-shadow: 0 1px rgba(255,255,255,.12); }
.num span { flex: 1; padding-top: 1px; }
.num input { width: 50%; height: 18px; padding-top: 2px; text-align: right; font-family: var(--num); }
.num::before, .num::after { content: ""; position: absolute; top: 6px; border: 3px solid transparent; }
.num::before { left: 5px; border-right: 4px solid #6a6a6a; border-left: 0; }
.num::after { right: 5px; border-left: 4px solid #6a6a6a; border-right: 0; }
.stack .num:not(:last-child) { border-radius: 10px 10px 0 0; }
.stack .num + .num, .mixed .num { border-top: 0; }
.stack .num + .num:not(:last-child) { border-radius: 0; }
.stack .num:last-child { border-radius: 0 0 10px 10px; }
.mixed select { border-radius: 5px 5px 0 0; }
.off { background: #8c8c8c; color: #4a4a4a; }
.preset .drop { flex: 1; }
.preset select { border-radius: 5px 0 0 5px; }
.object-field { display: flex; align-items: center; height: 20px; padding: 0 1px 0 4px; background: var(--light); border: 1px solid #333; border-radius: 4px; }
.object-field input { flex: 1; }
.hq { padding-left: 3px; }
.edge { height: 2px; flex: none; background: linear-gradient(90deg, #0a0a0a 36%, #3a3a3a 36%, #3a3a3a 39%, #0a0a0a 39%); }
```
